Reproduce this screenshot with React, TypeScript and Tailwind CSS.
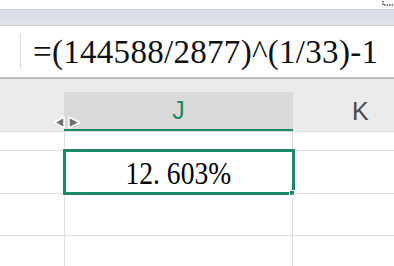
import { ReactNode } from 'react';

const GREEN = '#1b8a62';

function Row({ h, sel, children }: { h: string; sel?: boolean; children?: ReactNode }) {
  return (
    <div className={`flex border-b border-[#e0e0e0] ${h}`}>
      <div className="w-[65px] shrink-0 border-r border-[#e0e0e0]" />
      <div className="relative w-[228px] shrink-0 border-r border-[#e0e0e0] flex items-center justify-center">
        {sel && (
          <>
            <div className="absolute -left-[2px] -top-[2px] -right-[3px] -bottom-[2px] border-[3px] border-[#1b8a62]" />
            <div className="absolute -right-[3px] -bottom-[3px] w-[6px] h-[6px] bg-[#1b8a62] border border-white" />
          </>
        )}
        {children}
      </div>
      <div className="flex-1" />
    </div>
  );
}

function ResizeCursor() {
  return (
    <svg className="absolute left-[53px] top-[116px]" width="28" height="13" viewBox="0 0 28 13">
      <polygon points="1.5,6.5 11,1 11,12" fill="#6e6e6e" stroke="#ffffff" strokeWidth="1.5" strokeLinejoin="round" />
      <polygon points="26.5,6.5 16,1 16,12" fill="#6e6e6e" stroke="#ffffff" strokeWidth="1.5" strokeLinejoin="round" />
    </svg>
  );
}

export default function App() {
  return (
    <div className="relative w-[394px] h-[266px] overflow-hidden bg-white [font-family:Liberation_Sans,Arial,sans-serif]">
      {/* toolbar strip */}
      <div className="relative h-[9px] bg-white">
        <svg className="absolute right-0 top-0" width="12" height="7" viewBox="0 0 12 7">
          <path d="M1 1 L1 5 L11 5" fill="none" stroke="#555" strokeWidth="1.5" strokeDasharray="1.5 1" />
        </svg>
      </div>
      <div className="h-[17px] border-t border-b border-t-[#cdd0d8] border-b-[#c6c8cf] bg-gradient-to-b from-[#d9dce4] to-[#e2e4ea]" />

      {/* formula bar */}
      <div className="flex h-[51px] items-center">
        <div className="ml-[20px] h-[35px] w-px shrink-0 bg-[#dcdcdc]" />
        <div className="ml-[12px] mt-[1px] text-[33px] leading-none tracking-[0.3px] text-[#111] [font-family:Liberation_Serif,Times_New_Roman,serif] whitespace-nowrap">
          =(144588/2877)^(1/33)-1
        </div>
      </div>
      <div className="h-[2px] bg-[#bdbdbd]" />

      {/* column headers */}
      <div className="flex h-[53px] items-end bg-[#ebebeb] border-b border-[#dcdcdc]">
        <div className="w-[64px] shrink-0" />
        <div className="flex h-[39px] w-[229px] shrink-0 items-center justify-center bg-[#dadada] border-b-2 border-[#1b8a62] text-[25px] leading-none" style={{ color: GREEN }}>
          J
        </div>
        <div className="flex h-[39px] flex-1 items-center pl-[59px] text-[25px] leading-none text-[#4a4a4a]">
          K
        </div>
      </div>

      {/* grid */}
      <Row h="h-[19px]" />
      <Row h="h-[43px]" sel>
        <span className="mt-[2px] text-[32px] leading-none text-black scale-x-[0.86] [font-family:Liberation_Serif,Times_New_Roman,serif] whitespace-nowrap">
          12.&nbsp;603%
        </span>
      </Row>
      <Row h="h-[42px]" />
      <Row h="h-[40px]" />

      <ResizeCursor />
    </div>
  );
}
